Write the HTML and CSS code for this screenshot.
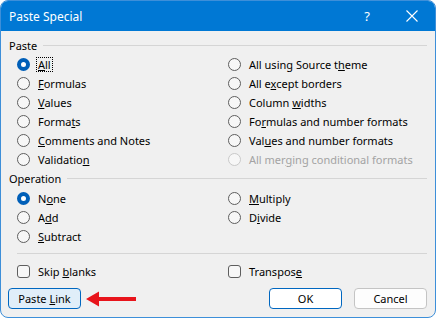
FILE: index.html
```html
<!DOCTYPE html>
<html>
<head>
    <title>Paste Special</title>
    <link rel="stylesheet" href="styles.css">
</head>
<body>
    <div class="dialog">
        <div class="titlebar">
            <span class="title">Paste Special</span>
            <span class="help">?</span>
            <span class="close">
                <svg width="12" height="12" viewBox="0 0 12 12">
                    <path d="M0.5 0.5 L11.5 11.5 M11.5 0.5 L0.5 11.5" stroke="#fff" stroke-width="1.1" fill="none"/>
                </svg>
            </span>
        </div>

        <div class="content">
            <div class="group-head"><span>Paste</span><div class="line"></div></div>
            <div class="options">
                <div class="opt"><span class="radio on"></span><span class="focus"><u>A</u>ll</span></div>
                <div class="opt"><span class="radio"></span><span>All using Source t<u>h</u>eme</span></div>
                <div class="opt"><span class="radio"></span><span><u>F</u>ormulas</span></div>
                <div class="opt"><span class="radio"></span><span>All e<u>x</u>cept borders</span></div>
                <div class="opt"><span class="radio"></span><span><u>V</u>alues</span></div>
                <div class="opt"><span class="radio"></span><span>Column <u>w</u>idths</span></div>
                <div class="opt"><span class="radio"></span><span>Forma<u>t</u>s</span></div>
                <div class="opt"><span class="radio"></span><span>Fo<u>r</u>mulas and number formats</span></div>
                <div class="opt"><span class="radio"></span><span><u>C</u>omments and Notes</span></div>
                <div class="opt"><span class="radio"></span><span>Val<u>u</u>es and number formats</span></div>
                <div class="opt"><span class="radio"></span><span>Validatio<u>n</u></span></div>
                <div class="opt disabled"><span class="radio"></span><span>All mer<u>g</u>ing conditional formats</span></div>
            </div>

            <div class="group-head"><span>Operation</span><div class="line"></div></div>
            <div class="options">
                <div class="opt"><span class="radio on"></span><span>N<u>o</u>ne</span></div>
                <div class="opt"><span class="radio"></span><span><u>M</u>ultiply</span></div>
                <div class="opt"><span class="radio"></span><span>A<u>d</u>d</span></div>
                <div class="opt"><span class="radio"></span><span>D<u>i</u>vide</span></div>
                <div class="opt"><span class="radio"></span><span><u>S</u>ubtract</span></div>
                <div class="opt"></div>
            </div>

            <div class="sep"></div>

            <div class="options checks">
                <div class="opt"><span class="check"></span><span>Skip <u>b</u>lanks</span></div>
                <div class="opt"><span class="check"></span><span>Transpos<u>e</u></span></div>
            </div>

            <div class="buttons">
                <button class="btn link">Paste <u>L</u>ink</button>
                <svg class="arrow" width="50" height="16" viewBox="0 0 50 16">
                    <polygon points="0,8 13,0.5 13,6 50,6 50,10 13,10 13,15.5" fill="#e8141b"/>
                </svg>
                <div class="spacer"></div>
                <button class="btn default">OK</button>
                <button class="btn">Cancel</button>
            </div>
        </div>
    </div>
</body>
</html>
```

FILE: styles.css
```css
body {
    margin: 0;
    background-color: #ffffff;
    font-family: "Noto Sans", "Open Sans", sans-serif;
    font-size: 11px;
    color: #000000;
}

.dialog {
    width: 436px;
    height: 318px;
    box-sizing: border-box;
    border: 1px solid #3d8fd9;
    border-radius: 8px;
    overflow: hidden;
    background-color: #f0f0f0;
}

.titlebar {
    height: 30px;
    background-color: #0078d4;
    color: #ffffff;
    display: flex;
    align-items: center;
    padding-left: 8px;
}

.title {
    font-size: 12px;
    flex: 1;
}

.help {
    font-size: 13px;
    width: 20px;
    text-align: center;
    margin-right: 29px;
}

.close {
    width: 12px;
    height: 12px;
    display: flex;
    margin-right: 17px;
}

.content {
    padding: 4px 8px 0 7px;
}

.group-head {
    display: flex;
    align-items: center;
    height: 20px;
    margin-left: 1px;
}

.group-head .line {
    flex: 1;
    height: 1px;
    background-color: #d5d5d5;
    margin-left: 6px;
}

.options + .group-head {
    margin-top: -1px;
    margin-bottom: 1px;
}

.options {
    display: grid;
    grid-template-columns: 211px 1fr;
    padding-left: 9px;
}

.opt {
    height: 19px;
    display: flex;
    align-items: center;
    white-space: nowrap;
}

.opt u, .btn u {
    text-decoration-thickness: 1px;
    text-underline-offset: 1px;
}

.radio {
    width: 11px;
    height: 11px;
    border: 1px solid #5e5e5e;
    border-radius: 50%;
    background-color: #f7f7f7;
    margin-right: 8px;
    flex-shrink: 0;
}

.radio.on {
    width: 5px;
    height: 5px;
    border: 4px solid #005fb8;
    background-color: #ffffff;
}

.disabled {
    color: #a3a3a3;
}

.disabled .radio {
    border-color: #c9c9c9;
}

.focus {
    outline: 1px dotted #000000;
    padding: 0 1px;
    margin-left: -1px;
    line-height: 13px;
}

.sep {
    height: 1px;
    background-color: #d5d5d5;
    margin: 7px 0 8px 9px;
}

.check {
    width: 11px;
    height: 11px;
    border: 1px solid #5e5e5e;
    border-radius: 3px;
    background-color: #f7f7f7;
    margin-right: 8px;
    flex-shrink: 0;
}

.buttons {
    display: flex;
    align-items: center;
    margin-top: 7px;
    gap: 12px;
}

.spacer {
    flex: 1;
}

.btn {
    width: 73px;
    height: 21px;
    font-family: inherit;
    font-size: 11px;
    color: #000000;
    background-color: #fdfdfd;
    border: 1px solid #c4c4c4;
    border-radius: 4px;
    padding: 0;
}

.btn.link {
    background-color: #e0eef9;
    border-color: #0067c0;
}

.btn.default {
    border-color: #0067c0;
    background-color: #ffffff;
}

.arrow {
    margin-left: -7px;
}
```
